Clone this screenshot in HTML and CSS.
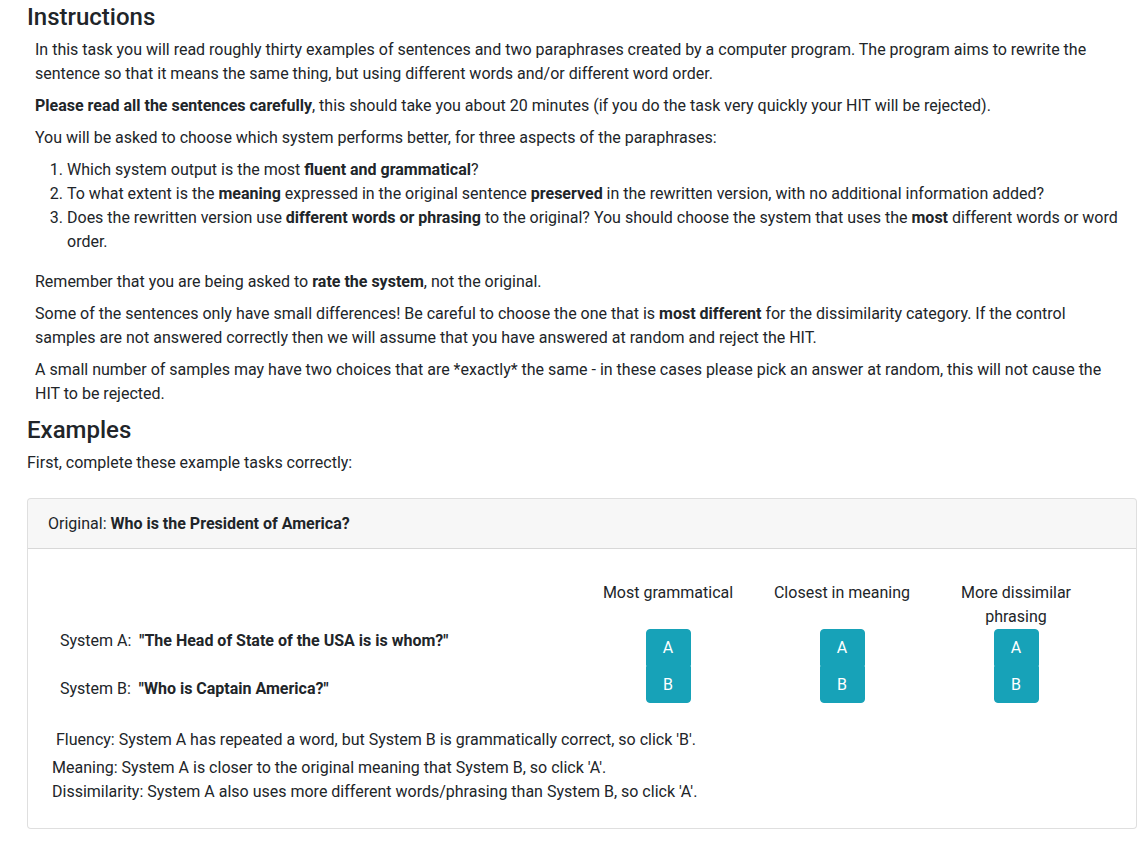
FILE: index.html
```html
<!DOCTYPE html>
<html lang="en">
<head>
<meta charset="utf-8">
<title>Instructions</title>
<link rel="stylesheet" href="styles.css">
</head>
<body>
<div class="page">
  <h3 class="title">Instructions</h3>
  <div class="instructions">
    <p>In this task you will read roughly thirty examples of sentences and two paraphrases created by a computer program. The program aims to rewrite the sentence so that it means the same thing, but using different words and/or different word order.</p>
    <p><b>Please read all the sentences carefully</b>, this should take you about 20 minutes (if you do the task very quickly your HIT will be rejected).</p>
    <p>You will be asked to choose which system performs better, for three aspects of the paraphrases:</p>
    <ol class="aspects">
      <li>Which system output is the most <b>fluent and grammatical</b>?</li>
      <li>To what extent is the <b>meaning</b> expressed in the original sentence <b>preserved</b> in the rewritten version, with no additional information added?</li>
      <li>Does the rewritten version use <b>different words or phrasing</b> to the original? You should choose the system that uses the <b>most</b> different words or word order.</li>
    </ol>
    <p>Remember that you are being asked to <b>rate the system</b>, not the original.</p>
    <p>Some of the sentences only have small differences! Be careful to choose the one that is <b>most different</b> for the dissimilarity category. If the control samples are not answered correctly then we will assume that you have answered at random and reject the HIT.</p>
    <p>A small number of samples may have two choices that are *exactly* the same - in these cases please pick an answer at random, this will not cause the HIT to be rejected.</p>
  </div>
  <h3 class="title examples-title">Examples</h3>
  <p class="intro">First, complete these example tasks correctly:</p>

  <div class="card">
    <div class="card-header">Original: <b>Who is the President of America?</b></div>
    <div class="card-body">
      <div class="grid">
        <div class="cell head"></div>
        <div class="cell head center">Most grammatical</div>
        <div class="cell head center">Closest in meaning</div>
        <div class="cell head center">More dissimilar phrasing</div>

        <div class="cell systems">
          <div class="sys">System A:&nbsp; <b>"The Head of State of the USA is is whom?"</b></div>
          <div class="sys">System B:&nbsp; <b>"Who is Captain America?"</b></div>
        </div>
        <div class="cell center">
          <div class="btn-group"><button class="btn">A</button><button class="btn">B</button></div>
        </div>
        <div class="cell center">
          <div class="btn-group"><button class="btn">A</button><button class="btn">B</button></div>
        </div>
        <div class="cell center">
          <div class="btn-group"><button class="btn">A</button><button class="btn">B</button></div>
        </div>
      </div>
      <div class="explain">
        <div class="fluency">Fluency: System A has repeated a word, but System B is grammatically correct, so click 'B'.</div>
        <div>Meaning: System A is closer to the original meaning that System B, so click 'A'.</div>
        <div>Dissimilarity: System A also uses more different words/phrasing than System B, so click 'A'.</div>
      </div>
    </div>
  </div>
</div>
</body>
</html>
```

FILE: styles.css
```css
* { box-sizing: border-box; }
body {
  margin: 0;
  font-family: Roboto, "Liberation Sans", sans-serif;
  font-size: 16px;
  line-height: 1.5;
  color: #212529;
  background: #fff;
}
b { font-weight: 700; }
.page {
  padding: 0 9px 20px 27px;
}
.title {
  font-size: 24px;
  font-weight: 500;
  line-height: 1.2;
  margin: 3px 0 6px;
}
.instructions {
  padding: 0 8px;
}
.instructions p {
  margin: 0 0 8px;
}
.aspects {
  margin: 0 0 16px;
  padding-left: 32px;
}
.examples-title {
  margin: 10px 0 6px;
}
.intro {
  margin: 0 0 23px;
}
.card {
  border: 1px solid rgba(0,0,0,.125);
  border-radius: 4px;
  background: #fff;
}
.card-header {
  padding: 13px 20px 12px;
  background: rgba(0,0,0,.03);
  border-bottom: 1px solid rgba(0,0,0,.125);
  border-radius: 3px 3px 0 0;
}
.card-body {
  padding: 20px;
}
.grid {
  display: grid;
  grid-template-columns: 1fr 174px 174px 174px;
  margin-right: 13px;
}
.cell {
  padding: 0 12px;
}
.cell.head {
  padding-top: 12px;
}
.center {
  text-align: center;
}
.sys {
  margin-bottom: 24px;
}
.sys:last-child {
  margin-bottom: 0;
}
.btn-group {
  display: inline-flex;
  flex-direction: column;
  vertical-align: top;
}
.btn {
  font-family: inherit;
  font-size: 16px;
  line-height: 24px;
  width: 45px;
  padding: 6px 0;
  height: 37px;
  color: #fff;
  background: #17a2b8;
  border: 1px solid #17a2b8;
  margin: 0;
}
.btn:first-child {
  border-radius: 4px 4px 0 0;
}
.btn:last-child {
  border-radius: 0 0 4px 4px;
}
.explain {
  padding: 25px 0 4px 4px;
}
.fluency {
  padding-left: 4px;
  margin-bottom: 4px;
}
```
